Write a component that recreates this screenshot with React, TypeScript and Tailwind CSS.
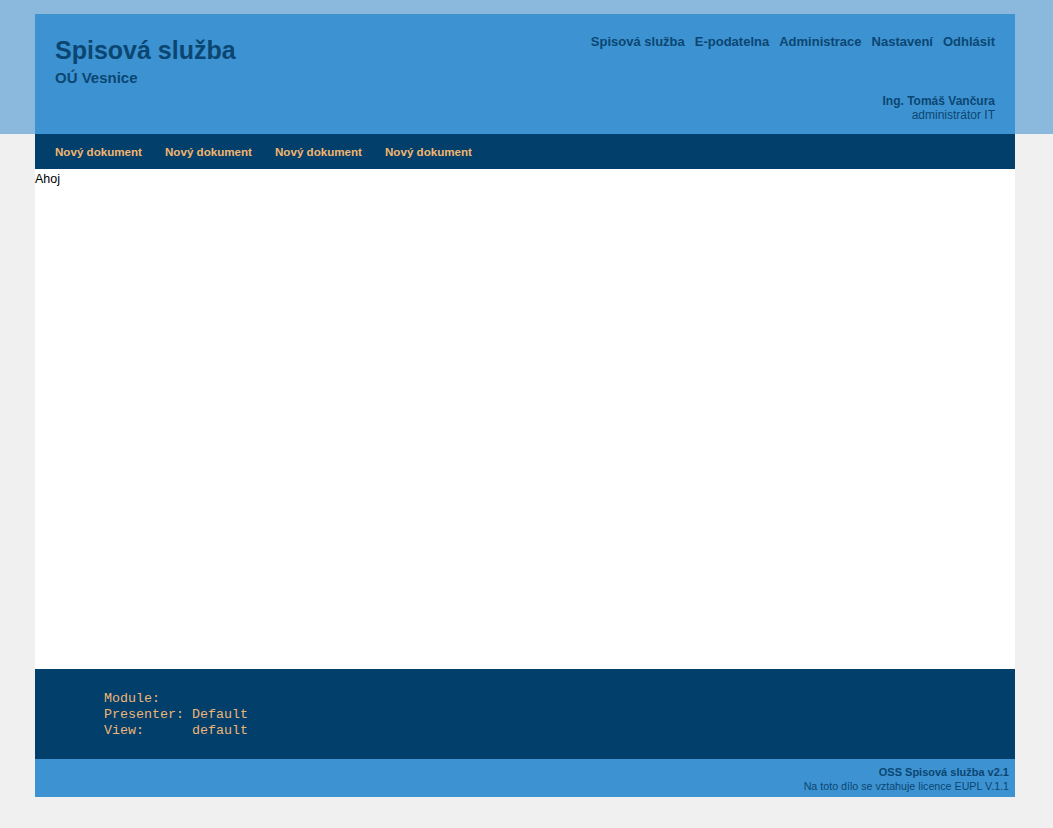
import React from "react";

export default function App() {
  const topLinks = ["Spisová služba", "E-podatelna", "Administrace", "Nastavení", "Odhlásit"];
  return (
    <div className="min-h-[828px] bg-[#f0f0f0] font-['Liberation_Sans',Arial,sans-serif] relative">
      <div className="absolute left-0 right-0 top-0 h-[134px] bg-[#8bb8dd]" />
      <div className="relative pt-[14px] pb-[31px]">
        <div className="ml-[35px] w-[980px]">
          <header className="h-[120px] bg-[#3d93d1] flex justify-between px-5 text-[#0b4673]">
            <div className="pt-[22px]">
              <h1 className="text-[25px] font-bold leading-[28px]">Spisová služba</h1>
              <div className="text-[15px] font-bold leading-[18px] mt-[5px]">OÚ Vesnice</div>
            </div>
            <div className="flex flex-col items-end justify-between pt-[20px] pb-[12px]">
              <nav className="flex gap-[10px] text-[13px] font-bold leading-[16px]">
                {topLinks.map((l) => (
                  <span key={l}>{l}</span>
                ))}
              </nav>
              <div className="text-right text-[12px] leading-[14px]">
                <div className="font-bold">Ing. Tomáš Vančura</div>
                <div>administrátor IT</div>
              </div>
            </div>
          </header>
          <div className="h-[35px] bg-[#023f6a] flex items-center px-5 gap-[20px] text-[11.6px] font-bold text-[#f2b56e]">
            {[0, 1, 2, 3].map((i) => (
              <span key={i} className="w-[90px]">Nový dokument</span>
            ))}
          </div>
          <main className="h-[500px] bg-white text-[12.5px] leading-[18px] text-black pt-px">Ahoj</main>
          <footer className="h-[90px] bg-[#023f6a] pl-[69px] pt-[22px]">
            <pre className="font-['Liberation_Mono','Courier_New',monospace] text-[13.333px] leading-[16px] text-[#eeb477] m-0">
{`Module:
Presenter: Default
View:      default`}
            </pre>
          </footer>
          <div className="h-[38px] bg-[#3d93d1] text-right pr-[6px] pt-[6px] text-[11px] leading-[14px] text-[#0b4673]">
            <div className="font-bold">OSS Spisová služba v2.1</div>
            <div className="text-[10.7px]">Na toto dílo se vztahuje licence EUPL V.1.1</div>
          </div>
        </div>
      </div>
    </div>
  );
}
